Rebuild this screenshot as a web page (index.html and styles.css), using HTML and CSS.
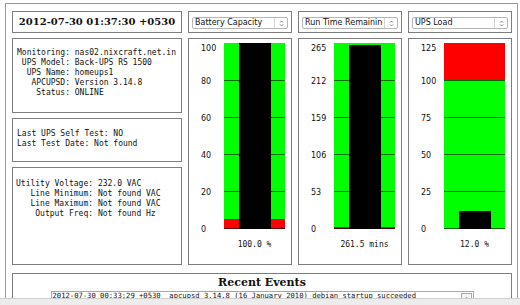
FILE: index.html
```html
<!DOCTYPE html>
<html lang="en">
<head>
    <meta charset="UTF-8">
    <meta name="viewport" content="width=device-width, initial-scale=1.0">
    <title>apcupsd - UPS Status</title>
    <link rel="stylesheet" href="styles.css">
</head>
<body>
    <div class="frame">
        <div class="panels">
            <div class="info">
                <div class="box title">2012-07-30 01:37:30 +0530</div>
                <div class="box status"><pre>Monitoring: nas02.nixcraft.net.in
 UPS Model: Back-UPS RS 1500
  UPS Name: homeups1
   APCUPSD: Version 3.14.8
    Status: ONLINE</pre></div>
                <div class="box selftest"><pre>Last UPS Self Test: NO
Last Test Date: Not found</pre></div>
                <div class="box power"><pre>Utility Voltage: 232.0 VAC
   Line Minimum: Not found VAC
   Line Maximum: Not found VAC
    Output Freq: Not found Hz</pre></div>
            </div>

            <div class="gauge">
                <div class="box picker">
                    <div class="select">
                        <select><option>Battery Capacity</option></select>
                        <span class="arrows"><svg width="5" height="7" viewBox="0 0 5 7"><path d="M1 2.6 2.5 1.1 4 2.6M1 4.4 2.5 5.9 4 4.4" fill="none" stroke="#666" stroke-width="0.8"/></svg></span>
                    </div>
                </div>
                <div class="box chart">
                    <div class="axis">
                        <span style="top: 1px">100</span>
                        <span style="top: 34px">80</span>
                        <span style="top: 71px">60</span>
                        <span style="top: 108px">40</span>
                        <span style="top: 145px">20</span>
                        <span style="top: 182px">0</span>
                    </div>
                    <div class="area">
                        <div class="red" style="bottom: 0; height: 10px"></div>
                        <div class="line" style="top: 37px"></div>
                        <div class="line" style="top: 74px"></div>
                        <div class="line" style="top: 111px"></div>
                        <div class="line" style="top: 148px"></div>
                        <div class="line" style="top: 185px"></div>
                        <div class="bar" style="height: 186px"></div>
                    </div>
                    <div class="reading">100.0 %</div>
                </div>
            </div>

            <div class="gauge">
                <div class="box picker">
                    <div class="select">
                        <select><option>Run Time Remaining</option></select>
                        <span class="arrows"><svg width="5" height="7" viewBox="0 0 5 7"><path d="M1 2.6 2.5 1.1 4 2.6M1 4.4 2.5 5.9 4 4.4" fill="none" stroke="#666" stroke-width="0.8"/></svg></span>
                    </div>
                </div>
                <div class="box chart">
                    <div class="axis">
                        <span style="top: 1px">265</span>
                        <span style="top: 34px">212</span>
                        <span style="top: 71px">159</span>
                        <span style="top: 108px">106</span>
                        <span style="top: 145px">53</span>
                        <span style="top: 182px">0</span>
                    </div>
                    <div class="area">
                        <div class="red" style="bottom: 0; height: 2px"></div>
                        <div class="line" style="top: 37px"></div>
                        <div class="line" style="top: 74px"></div>
                        <div class="line" style="top: 111px"></div>
                        <div class="line" style="top: 148px"></div>
                        <div class="line" style="top: 185px"></div>
                        <div class="bar" style="height: 184px"></div>
                    </div>
                    <div class="reading">261.5 mins</div>
                </div>
            </div>

            <div class="gauge">
                <div class="box picker">
                    <div class="select">
                        <select><option>UPS Load</option></select>
                        <span class="arrows"><svg width="5" height="7" viewBox="0 0 5 7"><path d="M1 2.6 2.5 1.1 4 2.6M1 4.4 2.5 5.9 4 4.4" fill="none" stroke="#666" stroke-width="0.8"/></svg></span>
                    </div>
                </div>
                <div class="box chart">
                    <div class="axis">
                        <span style="top: 1px">125</span>
                        <span style="top: 34px">100</span>
                        <span style="top: 71px">75</span>
                        <span style="top: 108px">50</span>
                        <span style="top: 145px">25</span>
                        <span style="top: 182px">0</span>
                    </div>
                    <div class="area">
                        <div class="red" style="top: 0; height: 37px"></div>
                        <div class="line" style="top: 37px"></div>
                        <div class="line" style="top: 74px"></div>
                        <div class="line" style="top: 111px"></div>
                        <div class="line" style="top: 148px"></div>
                        <div class="line" style="top: 185px"></div>
                        <div class="bar" style="height: 18px"></div>
                    </div>
                    <div class="reading">12.0 %</div>
                </div>
            </div>
        </div>

        <div class="box events">
            <h2>Recent Events</h2>
            <div class="log">2012-07-30 00:33:29 +0530  apcupsd 3.14.8 (16 January 2010) debian startup succeeded<span class="scroll-up"><svg width="5" height="4" viewBox="0 0 5 4"><path d="M0.5 3.5 2.5 0.8 4.5 3.5z" fill="#888"/></svg></span></div>
        </div>
    </div>
    <div class="statusbar"></div>
</body>
</html>
```

FILE: styles.css
```css
body {
    margin: 0;
    background: #fff;
    color: #111;
    font-family: "DejaVu Sans", sans-serif;
    font-size: 8px;
    overflow: hidden;
}

.frame {
    box-sizing: border-box;
    width: 513px;
    height: 310px;
    margin: 3px 0 0 5px;
    padding: 7px 5px 0 6px;
    border: 1px solid #999;
    border-bottom: none;
}

.panels {
    display: grid;
    grid-template-columns: 170px repeat(3, 104px);
    column-gap: 6px;
    height: 254px;
}

.box {
    box-sizing: border-box;
    border: 1px solid #7d7d7d;
}

pre {
    margin: 0;
    font: 8px/10px "DejaVu Sans Mono", monospace;
}

/* left column */
.info {
    display: flex;
    flex-direction: column;
    gap: 5px;
}

.title {
    height: 22px;
    font: bold 10px/20px "DejaVu Serif", serif;
    text-align: center;
}

.status {
    height: 75px;
    padding: 9px 4px 0;
}

.selftest {
    height: 44px;
    padding: 10px 4px 0;
}

.power {
    flex: 1;
    padding: 11px 3px 0;
}

/* gauges */
.gauge {
    display: flex;
    flex-direction: column;
    gap: 5px;
}

.picker {
    height: 22px;
    padding: 5px 3px 0;
}

.select {
    position: relative;
    height: 12px;
}

.select select {
    box-sizing: border-box;
    appearance: none;
    width: 96px;
    height: 12px;
    margin: 0;
    padding: 0 14px 0 2px;
    border: 1px solid #b5b5b5;
    border-radius: 2px;
    background: #fff;
    color: #111;
    font: 8px/10px "DejaVu Sans", sans-serif;
}

.arrows {
    position: absolute;
    top: 1px;
    right: 1px;
    width: 12px;
    height: 10px;
    border-left: 1px solid #d4d4d4;
    display: flex;
    align-items: center;
    justify-content: center;
    pointer-events: none;
}

.chart {
    flex: 1;
    padding-top: 4px;
    display: grid;
    grid-template-columns: 35px 61px;
    grid-template-rows: 186px auto;
}

.axis {
    position: relative;
}

.axis span {
    position: absolute;
    left: 12px;
    line-height: 10px;
}

.area {
    position: relative;
    overflow: hidden;
    background: #0f0;
}

.red {
    position: absolute;
    left: 0;
    right: 0;
    background: #f00;
}

.line {
    position: absolute;
    left: 0;
    right: 0;
    height: 1px;
    background: rgba(0, 0, 0, 0.6);
}

.bar {
    position: absolute;
    left: 15px;
    bottom: 0;
    width: 32px;
    background: #000;
}

.reading {
    grid-column: 2;
    margin-top: 11px;
    text-align: center;
    font: 8px/10px "DejaVu Sans Mono", monospace;
}

/* events */
.events {
    height: 40px;
    margin-top: 8px;
}

.events h2 {
    margin: 3px 0 2px;
    font: bold 11px/12px "DejaVu Serif", serif;
    text-align: center;
}

.log {
    position: relative;
    box-sizing: border-box;
    width: 423px;
    height: 14px;
    margin: 0 auto;
    padding-left: 1px;
    border: 1px solid #a8a8a8;
    font: 7.2px/7px "DejaVu Sans Mono", monospace;
    white-space: pre;
}

.scroll-up {
    position: absolute;
    top: 1px;
    right: 1px;
    width: 9px;
    height: 8px;
    border: 1px solid #aaa;
    background: #f4f4f4;
    display: flex;
    align-items: center;
    justify-content: center;
}

.statusbar {
    position: fixed;
    left: 0;
    right: 0;
    bottom: 0;
    height: 6px;
    background: #ececec;
    border-top: 1px solid #cfcfcf;
}
```
